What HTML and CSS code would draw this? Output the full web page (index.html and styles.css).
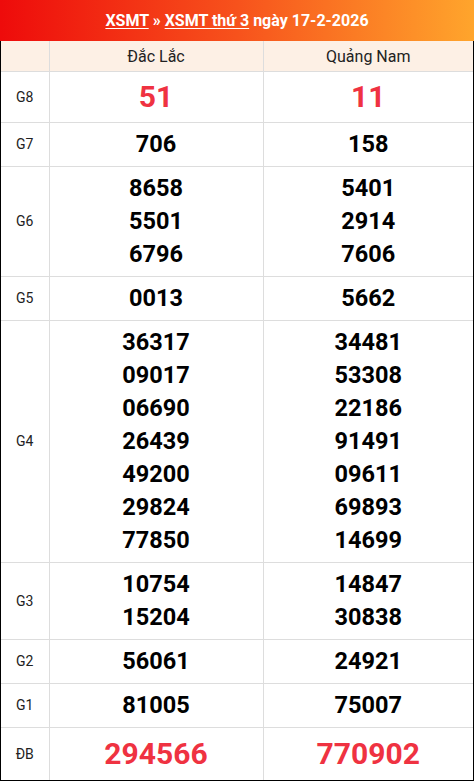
FILE: index.html
```html
<!DOCTYPE html>
<html lang="vi">
<head>
<meta charset="utf-8">
<link rel="stylesheet" href="styles.css">
</head>
<body>
<div class="box">
  <div class="title"><a href="#">XSMT</a> » <a href="#">XSMT thứ 3</a> ngày 17-2-2026</div>
  <table class="kq">
    <colgroup><col class="c0"><col class="c1"><col class="c2"></colgroup>
    <thead>
      <tr><th></th><th>Đắc Lắc</th><th>Quảng Nam</th></tr>
    </thead>
    <tbody>
      <tr class="big"><td class="lb">G8</td><td class="red">51</td><td class="red">11</td></tr>
      <tr><td class="lb">G7</td><td>706</td><td>158</td></tr>
      <tr><td class="lb">G6</td><td>8658<br>5501<br>6796</td><td>5401<br>2914<br>7606</td></tr>
      <tr><td class="lb">G5</td><td>0013</td><td>5662</td></tr>
      <tr><td class="lb">G4</td><td>36317<br>09017<br>06690<br>26439<br>49200<br>29824<br>77850</td><td>34481<br>53308<br>22186<br>91491<br>09611<br>69893<br>14699</td></tr>
      <tr><td class="lb">G3</td><td>10754<br>15204</td><td>14847<br>30838</td></tr>
      <tr><td class="lb">G2</td><td>56061</td><td>24921</td></tr>
      <tr><td class="lb">G1</td><td>81005</td><td>75007</td></tr>
      <tr class="big db"><td class="lb">ĐB</td><td class="red">294566</td><td class="red">770902</td></tr>
    </tbody>
  </table>
</div>
</body>
</html>
```
FILE: styles.css
```css
html, body {
  margin: 0;
  padding: 0;
  background: #fff;
}
body {
  font-family: Roboto, "Liberation Sans", Arial, sans-serif;
  color: #111;
}
.box {
  width: 474px;
  box-sizing: border-box;
  border-left: 1px solid #000;
  border-right: 1px solid #000;
  border-bottom: 1px solid #000;
}
.title {
  height: 41px;
  line-height: 42px;
  margin: 0 -1px;
  text-align: center;
  color: #fff;
  font-weight: 700;
  font-size: 16px;
  background: linear-gradient(90deg, #ee0b0b 0%, #f7521c 50%, #ffa52c 100%);
}
.title a {
  color: #fff;
  text-decoration: underline;
  text-underline-offset: 2px;
}
.kq {
  width: 100%;
  border-collapse: collapse;
  table-layout: fixed;
}
.c0 { width: 48px; }
.c1 { width: 214px; }
.kq th {
  height: 30px;
  padding: 0;
  font-weight: 400;
  font-size: 16px;
  color: #222;
  background: #fdf0e5;
  border-left: 1px solid #ddd;
  border-bottom: 1px solid #ddd;
}
.kq th:first-child { border-left: none; }
.kq td {
  padding: 5px 0;
  text-align: center;
  vertical-align: middle;
  font-size: 23.5px;
  font-weight: 700;
  line-height: 33px;
  color: #000;
  border-left: 1px solid #ddd;
  border-top: 1px solid #ddd;
}
.kq tbody tr:first-child td { border-top: none; }
.kq td.lb {
  border-left: none;
  font-size: 14px;
  font-weight: 400;
  color: #222;
}
.kq tr.big td { line-height: 40px; }
.kq tr.db td { line-height: 42px; }
.kq td.red {
  color: #ef3241;
  font-size: 30px;
}
```
